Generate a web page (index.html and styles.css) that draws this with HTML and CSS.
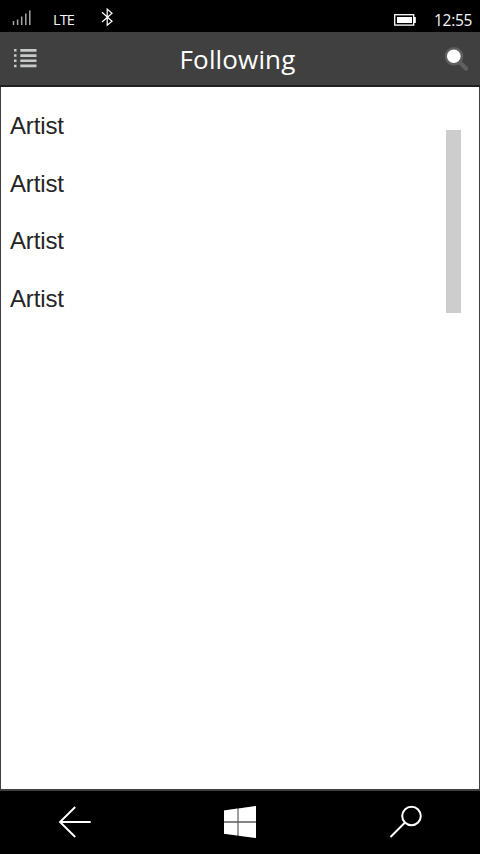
FILE: index.html
```html
<!DOCTYPE html>
<html lang="en">
<head>
<meta charset="utf-8">
<title>Following</title>
<link rel="stylesheet" href="styles.css">
</head>
<body>
<div class="phone">
  <div class="status">
    <svg class="signal" width="20" height="17" viewBox="0 0 20 17" stroke="#a6a6a6" stroke-width="1.5"><path d="M1.5 12v4M5.6 10.5V16M9.7 7.5V16M13.8 4.5V16M17.8 1.5V16"/></svg>
    <span class="network">LTE</span>
    <svg class="bluetooth" width="14" height="20" viewBox="0 0 14 20" fill="none" stroke="#fff" stroke-width="1.2"><path d="M2 5.3L12 14.3L7.2 18.2V2L12 6.3L2 15"/></svg>
    <svg class="battery" width="22" height="12" viewBox="0 0 22 12"><rect x=".7" y=".7" width="19" height="10.4" fill="none" stroke="#fff" stroke-width="1.3"/><path fill="#fff" d="M3 3h15v6H3zM20 3h1.8v6H20z"/></svg>
    <span class="clock">12:55</span>
  </div>
  <header class="header">
    <svg class="menu" width="23" height="19" viewBox="0 0 23 19" fill="#c8caca"><path d="M0 0h2.5v2.5H0zM0 5.3h2.5v2.5H0zM0 10.5h2.5V13H0zM0 15.7h2.5v2.5H0zM6.3 0H22.5v2.7H6.3zM6.3 5.2H22.5v2.7H6.3zM6.3 10.4H22.5v2.7H6.3zM6.3 15.5H22.5v2.7H6.3z"/></svg>
    <h1 class="title">Following</h1>
    <svg class="find" width="26" height="26" viewBox="0 0 26 26"><path d="M14.5 14L22 21.5" stroke="#5f5f5f" stroke-width="4.4" stroke-linecap="round"/><circle cx="10" cy="9.3" r="9.3" fill="#5f5f5f"/><circle cx="9.8" cy="9.3" r="6.8" fill="#fff"/></svg>
  </header>
  <main class="content">
    <ul class="artists">
      <li>Artist</li>
      <li>Artist</li>
      <li>Artist</li>
      <li>Artist</li>
    </ul>
    <div class="scrollbar"></div>
  </main>
  <nav class="nav">
    <svg class="back" width="34" height="34" viewBox="0 0 34 34" fill="none" stroke="#fff" stroke-width="1.9"><path d="M17.2 2L2 17L17.2 32M2 17H32.7"/></svg>
    <svg class="home" width="32" height="32" viewBox="0 0 32 32"><path fill="#5c5c5c" d="M0 4.5L32 0V32L0 27.8z"/><path fill="#fff" d="M0 4.5L13.4 2.5V15.3H0zM14.6 2.4L32 0V15.3H14.6zM0 16.7H13.4V29.5L0 27.8zM14.6 16.7H32V32L14.6 29.7z"/></svg>
    <svg class="lookup" width="34" height="34" viewBox="0 0 34 34" fill="none" stroke="#fff" stroke-width="2"><circle cx="22.5" cy="11" r="9.3"/><path d="M16 17.5L1.5 32"/></svg>
  </nav>
</div>
</body>
</html>
```
FILE: styles.css
```css
* { box-sizing: border-box; }
body { margin: 0; background: #000; }
svg { display: block; flex: none; }

.phone {
  display: flex;
  flex-direction: column;
  width: 480px;
  height: 854px;
  background: #000;
}

.status {
  display: flex;
  align-items: flex-start;
  height: 32px;
  color: #f5f5f5;
  font-family: "Open Sans", sans-serif;
  line-height: 20px;
}
.signal { margin: 9px 0 0 12px; }
.network { width: 26px; margin: 10px 0 0 21px; font-size: 14.5px; letter-spacing: -0.9px; }
.bluetooth { margin: 7px 0 0 21px; }
.battery { margin: 14px 0 0 auto; }
.clock { width: 46px; margin: 10px 0 0 18px; font-size: 15.5px; letter-spacing: -0.3px; }

.header {
  display: flex;
  justify-content: space-between;
  height: 55px;
  padding: 0 10px 0 14px;
  background: #404040;
  border-bottom: 2px solid #202020;
}
.menu { margin-top: 17px; }
.title {
  margin: 9px 0 0 -6px;
  color: #fff;
  font: 400 26px/36px "Open Sans", sans-serif;
  letter-spacing: 0.15px;
}
.find { margin-top: 15px; }

.content {
  display: flex;
  justify-content: space-between;
  flex: 1;
  padding: 10px 18px 0 9px;
  background: #fff;
  border: solid #404040;
  border-width: 0 1px 2px;
}
.artists {
  margin: 0;
  padding: 0;
  list-style: none;
  color: #252525;
  font: 24px/57.67px "Liberation Sans", Arial, sans-serif;
  letter-spacing: -0.15px;
}
.scrollbar { width: 15px; height: 183px; margin-top: 33px; background: #cdcdcd; }

.nav {
  display: flex;
  justify-content: space-between;
  height: 63px;
  padding: 14px 57px 0 58px;
}
.home { margin: 1px 0 0 -2px; }
```
